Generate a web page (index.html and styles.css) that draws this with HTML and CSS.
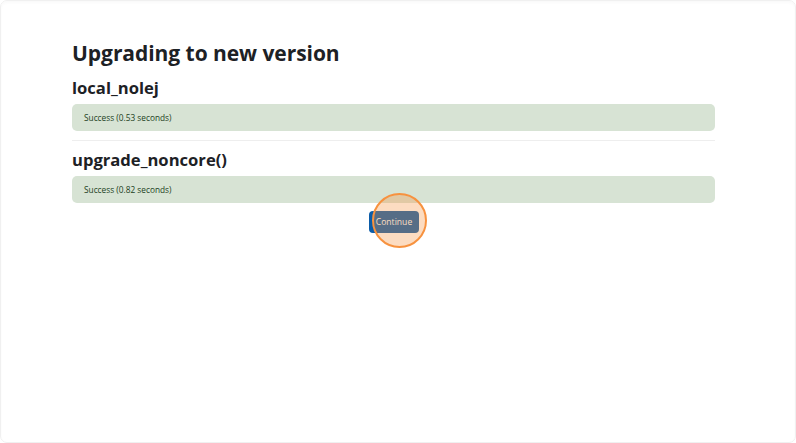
FILE: index.html
```html
<!DOCTYPE html>
<html>
<head>
<meta charset="utf-8">
<link rel="stylesheet" href="styles.css">
</head>
<body>
<div class="frame">
  <main class="content">
    <h2 class="title">Upgrading to new version</h2>
    <h3 class="section">local_nolej</h3>
    <div class="alert">Success (0.53 seconds)</div>
    <hr class="sep">
    <h3 class="section">upgrade_noncore()</h3>
    <div class="alert">Success (0.82 seconds)</div>
    <div class="actions">
      <button class="btn">Continue</button>
      <span class="highlight"></span>
    </div>
  </main>
</div>
</body>
</html>
```

FILE: styles.css
```css
html, body {
  margin: 0;
  padding: 0;
  width: 796px;
  height: 443px;
  overflow: hidden;
  background: #fff;
}
.frame {
  box-sizing: border-box;
  width: 796px;
  height: 443px;
  border: 1px solid #f0f0f0;
  border-radius: 7px;
  box-shadow: inset 0 2px 3px rgba(0,0,0,0.025);
  padding: 0 80px 0 71px;
  font-family: "Open Sans", "Noto Sans", sans-serif;
  color: #1d2125;
}
.content {
  display: flex;
  flex-direction: column;
}
.title {
  margin: 36px 0 0;
  font-size: 21px;
  font-weight: 700;
  line-height: 32px;
  letter-spacing: -0.05px;
}
.section {
  margin: 6px 0 0;
  font-size: 16.6px;
  font-weight: 700;
  line-height: 26px;
}
.alert {
  margin-top: 3px;
  height: 27px;
  box-sizing: border-box;
  padding: 0 12px;
  display: flex;
  align-items: center;
  background: #d7e3d4;
  border-radius: 5px;
  color: #1c3f1c;
  font-size: 8.3px;
}
.sep {
  margin: 9px 0 0;
  border: 0;
  border-top: 1.5px solid #eeeeee;
  height: 0;
}
.actions {
  position: relative;
  display: flex;
  justify-content: center;
  margin-top: 8px;
  padding-left: 1px;
}
.btn {
  height: 22px;
  width: 50px;
  padding: 0;
  border: 0;
  border-radius: 4px;
  background: #0b5ca8;
  color: #fff;
  font-family: "Open Sans", "Noto Sans", sans-serif;
  font-size: 8.6px;
}
.highlight {
  position: absolute;
  left: 300px;
  top: -18px;
  width: 51px;
  height: 51px;
  border: 2px solid #f7923f;
  border-radius: 50%;
  background: rgba(247, 145, 61, 0.32);
}
```
